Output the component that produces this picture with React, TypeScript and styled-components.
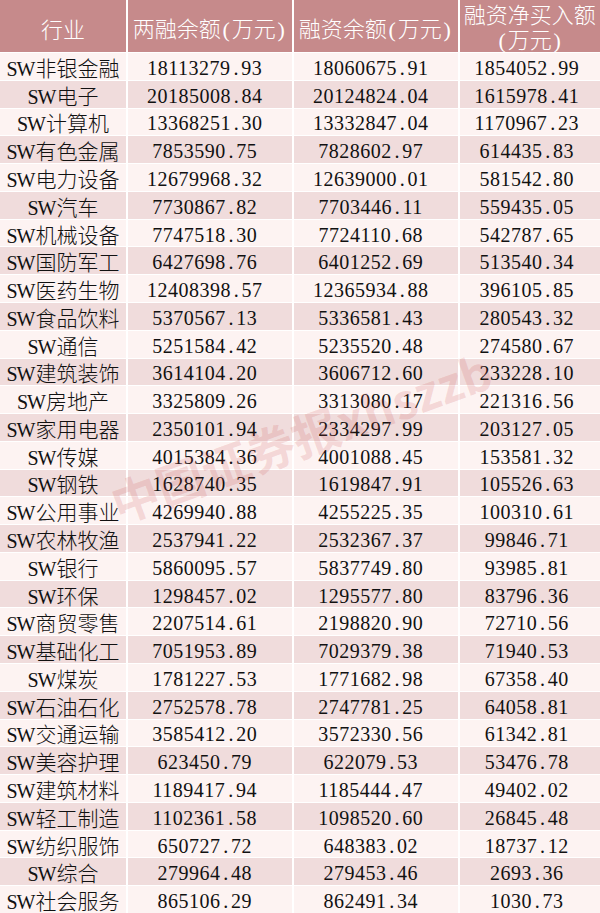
import React from "react";
import styled, { createGlobalStyle } from "styled-components";

const Global = createGlobalStyle`
  html, body { margin: 0; padding: 0; background: #ffffff; }
  body { width: 600px; height: 913px; overflow: hidden; }
`;

const rows: [string, string, string, string][] = [
  ["非银金融", "18113279.93", "18060675.91", "1854052.99"],
  ["电子", "20185008.84", "20124824.04", "1615978.41"],
  ["计算机", "13368251.30", "13332847.04", "1170967.23"],
  ["有色金属", "7853590.75", "7828602.97", "614435.83"],
  ["电力设备", "12679968.32", "12639000.01", "581542.80"],
  ["汽车", "7730867.82", "7703446.11", "559435.05"],
  ["机械设备", "7747518.30", "7724110.68", "542787.65"],
  ["国防军工", "6427698.76", "6401252.69", "513540.34"],
  ["医药生物", "12408398.57", "12365934.88", "396105.85"],
  ["食品饮料", "5370567.13", "5336581.43", "280543.32"],
  ["通信", "5251584.42", "5235520.48", "274580.67"],
  ["建筑装饰", "3614104.20", "3606712.60", "233228.10"],
  ["房地产", "3325809.26", "3313080.17", "221316.56"],
  ["家用电器", "2350101.94", "2334297.99", "203127.05"],
  ["传媒", "4015384.36", "4001088.45", "153581.32"],
  ["钢铁", "1628740.35", "1619847.91", "105526.63"],
  ["公用事业", "4269940.88", "4255225.35", "100310.61"],
  ["农林牧渔", "2537941.22", "2532367.37", "99846.71"],
  ["银行", "5860095.57", "5837749.80", "93985.81"],
  ["环保", "1298457.02", "1295577.80", "83796.36"],
  ["商贸零售", "2207514.61", "2198820.90", "72710.56"],
  ["基础化工", "7051953.89", "7029379.38", "71940.53"],
  ["煤炭", "1781227.53", "1771682.98", "67358.40"],
  ["石油石化", "2752578.78", "2747781.25", "64058.81"],
  ["交通运输", "3585412.20", "3572330.56", "61342.81"],
  ["美容护理", "623450.79", "622079.53", "53476.78"],
  ["建筑材料", "1189417.94", "1185444.47", "49402.02"],
  ["轻工制造", "1102361.58", "1098520.60", "26845.48"],
  ["纺织服饰", "650727.72", "648383.02", "18737.12"],
  ["综合", "279964.48", "279453.46", "2693.36"],
  ["社会服务", "865106.29", "862491.34", "1030.73"],
];

const Sheet = styled.div`
  position: relative;
  width: 600px;
  height: 913px;
  display: grid;
  grid-template-columns: 126px 164.5px 164.5px minmax(0, 1fr);
  grid-template-rows: 52px repeat(31, minmax(0, 1fr));
  gap: 1px 1.5px;
  background: #ffffff;
  overflow: hidden;
`;

const Row = styled.div`
  display: contents;
`;

const HeaderCell = styled.div<{ $double?: boolean }>`
  background: #c68a8b;
  color: #ffffff;
  display: flex;
  flex-direction: column;
  align-items: center;
  justify-content: center;
  padding-top: ${(p) => (p.$double ? 1 : 4)}px;
  font-family: "Liberation Serif", "Noto Sans CJK SC", serif;
  font-size: 22px;
  line-height: ${(p) => (p.$double ? 25 : 27)}px;
  white-space: nowrap;
  min-height: 0;
`;

const Cell = styled.div<{ $shade: boolean; $shift?: number }>`
  background: ${(p) => (p.$shade ? "#f0dcdc" : "#fdf3f2")};
  color: #111111;
  display: flex;
  align-items: center;
  justify-content: center;
  padding-top: 3px;
  padding-right: ${(p) => p.$shift ?? 0}px;
  font-family: "Liberation Serif", "Noto Sans CJK SC", serif;
  font-size: 20px;
  line-height: 20px;
  white-space: nowrap;
  min-height: 0;
`;

const Industry = styled.span`
  font-family: "Noto Sans CJK SC", sans-serif;
  font-size: 21px;
  line-height: 20px;
  font-weight: 300;
`;

const Latin = styled.span`
  font-family: "Liberation Serif", serif;
  font-size: 20px;
  letter-spacing: -1px;
  margin-right: 1px;
`;

const Num = styled.span`
  font-family: "Liberation Serif", serif;
  font-size: 20px;
  letter-spacing: 0.5px;
`;

const Dot = styled.span`
  display: inline-block;
  width: 10.5px;
  text-align: center;
  letter-spacing: 0;
`;

const Paren = styled.span`
  display: inline-block;
  width: 11px;
  text-align: center;
  font-family: "Liberation Serif", serif;
`;

const Cjk = styled.span`
  font-family: "Noto Sans CJK SC", sans-serif;
  font-weight: 300;
`;

const Watermark = styled.div`
  position: absolute;
  left: 112px;
  top: 476px;
  transform-origin: left center;
  transform: rotate(-20deg);
  font-family: "Noto Sans CJK SC", sans-serif;
  font-weight: 700;
  font-size: 48px;
  line-height: 56px;
  color: rgba(200, 70, 70, 0.16);
  white-space: nowrap;
  pointer-events: none;
`;

const Number: React.FC<{ v: string }> = ({ v }) => {
  const [a, b] = v.split(".");
  return (
    <Num>
      {a}
      <Dot>.</Dot>
      {b}
    </Num>
  );
};

const Unit: React.FC = () => (
  <span>
    <Paren>(</Paren>
    <Cjk>万元</Cjk>
    <Paren>)</Paren>
  </span>
);

export default function App() {
  return (
    <>
      <Global />
      <Sheet>
        <Row>
          <HeaderCell>
            <Cjk>行业</Cjk>
          </HeaderCell>
          <HeaderCell>
            <span>
              <Cjk>两融余额</Cjk>
              <Unit />
            </span>
          </HeaderCell>
          <HeaderCell>
            <span>
              <Cjk>融资余额</Cjk>
              <Unit />
            </span>
          </HeaderCell>
          <HeaderCell $double>
            <Cjk>融资净买入额</Cjk>
            <Unit />
          </HeaderCell>
        </Row>
        {rows.map((r, i) => {
          const shade = i % 2 === 1;
          return (
            <Row key={r[0]}>
              <Cell $shade={shade}>
                <Industry>
                  <Latin>SW</Latin>
                  {r[0]}
                </Industry>
              </Cell>
              <Cell $shade={shade} $shift={10}>
                <Number v={r[1]} />
              </Cell>
              <Cell $shade={shade} $shift={10}>
                <Number v={r[2]} />
              </Cell>
              <Cell $shade={shade} $shift={6}>
                <Number v={r[3]} />
              </Cell>
            </Row>
          );
        })}
        <Watermark>中国证券报xhszzb</Watermark>
      </Sheet>
    </>
  );
}
